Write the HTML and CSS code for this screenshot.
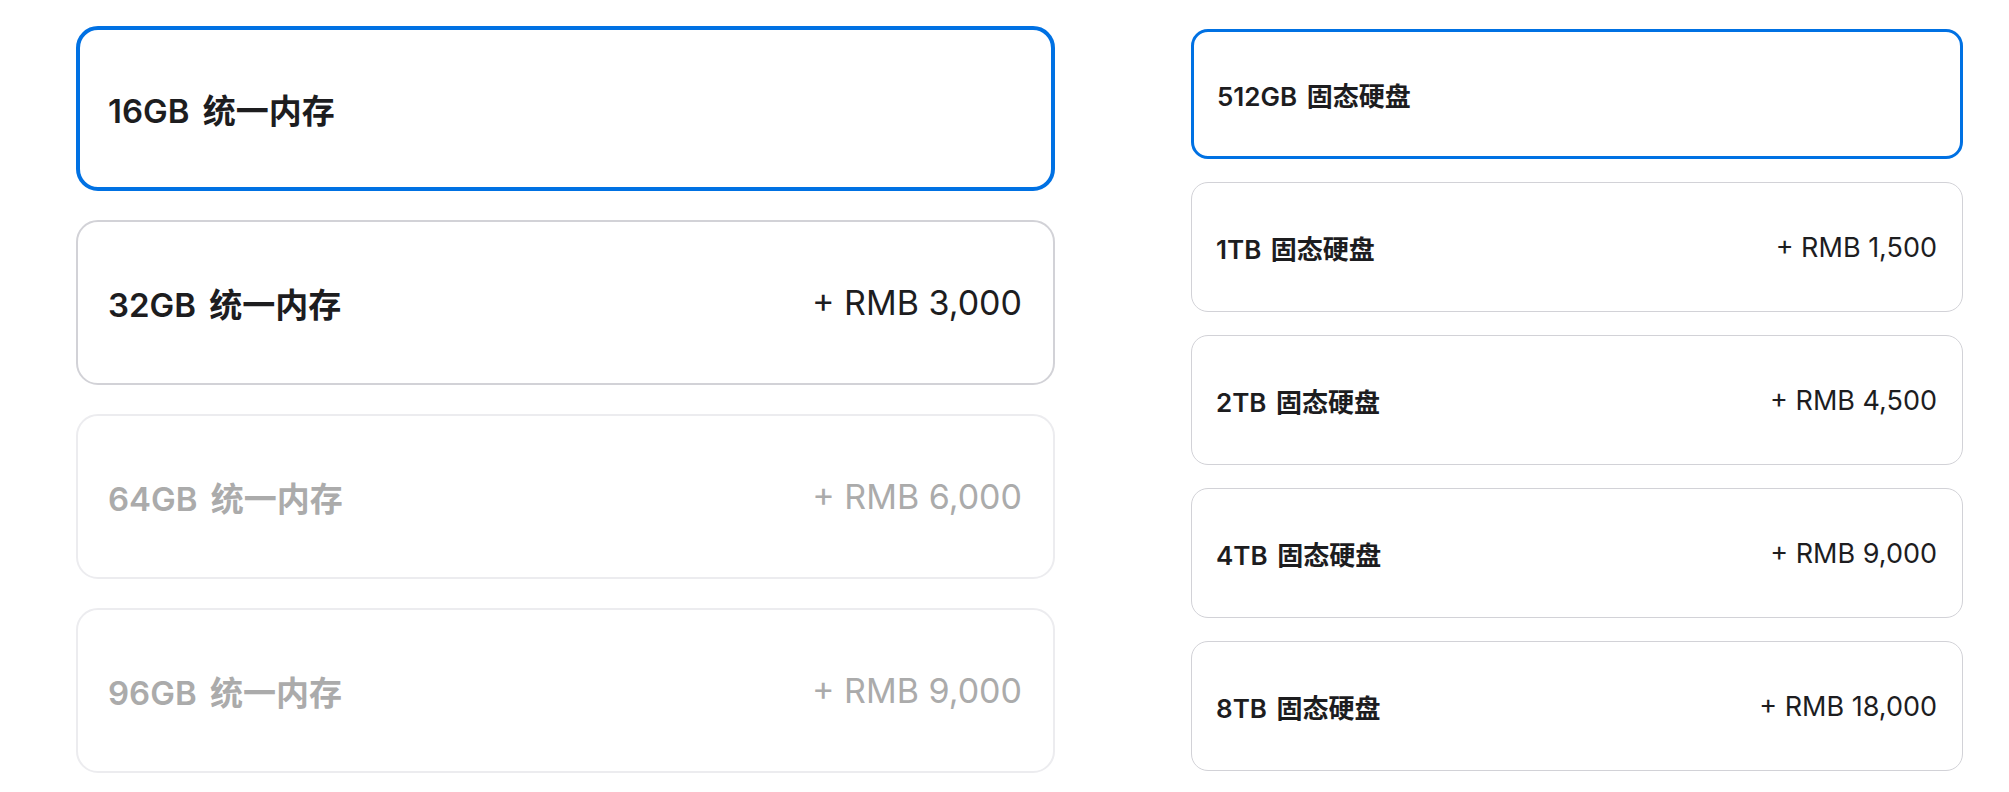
FILE: index.html
```html
<!DOCTYPE html>
<html lang="zh-CN">
<head>
<meta charset="utf-8">
<title>配置选项</title>
<link rel="stylesheet" href="styles.css">
</head>
<body>
<main class="page">
  <section class="col col-memory">
    <div class="option option-lg selected"><span class="label">16GB 统一内存</span></div>
    <div class="option option-lg"><span class="label">32GB 统一内存</span><span class="price">+ RMB 3,000</span></div>
    <div class="option option-lg disabled"><span class="label">64GB 统一内存</span><span class="price">+ RMB 6,000</span></div>
    <div class="option option-lg disabled"><span class="label">96GB 统一内存</span><span class="price">+ RMB 9,000</span></div>
  </section>
  <section class="col col-storage">
    <div class="option option-sm selected"><span class="label">512GB 固态硬盘</span></div>
    <div class="option option-sm"><span class="label">1TB 固态硬盘</span><span class="price">+ RMB 1,500</span></div>
    <div class="option option-sm"><span class="label">2TB 固态硬盘</span><span class="price">+ RMB 4,500</span></div>
    <div class="option option-sm"><span class="label">4TB 固态硬盘</span><span class="price">+ RMB 9,000</span></div>
    <div class="option option-sm"><span class="label">8TB 固态硬盘</span><span class="price">+ RMB 18,000</span></div>
  </section>
</main>
</body>
</html>
```

FILE: styles.css
```css
html, body {
  margin: 0;
  background: #fff;
}

body {
  font-family: Inter, "Noto Sans CJK SC", sans-serif;
  color: #1d1d1f;
}

.page {
  display: flex;
  gap: 136px;
  padding: 26px 0 0 76px;
}

.col {
  display: flex;
  flex-direction: column;
}

.col-memory {
  width: 979px;
  gap: 29px;
}

.col-storage {
  width: 772px;
  gap: 23px;
  margin-top: 3px;
}

.option {
  box-sizing: border-box;
  display: flex;
  align-items: center;
  justify-content: space-between;
  background: #fff;
  border-style: solid;
  border-color: #d2d2d7;
}

.label {
  font-weight: 600;
}

.price {
  font-weight: 400;
}

.option-lg {
  height: 165px;
  border-width: 2px;
  border-radius: 22px;
  padding: 0 31px 0 30px;
  font-size: 34px;
}

.option-lg .label {
  font-size: 33px;
  word-spacing: 5px;
}

.option-lg.selected {
  border-width: 4px;
  padding: 0 29px 0 28px;
}

.option-sm {
  height: 130px;
  border-width: 1.5px;
  border-radius: 17px;
  padding: 0 25px 0 24px;
  font-size: 27px;
}

.option-sm .label {
  font-size: 26px;
  word-spacing: 3px;
}

.option-sm.selected {
  border-width: 3px;
  padding: 0 24px 0 23px;
}

.selected {
  border-color: #0071e3;
}

.disabled {
  border-color: #ececef;
  color: #ababab;
}
```
